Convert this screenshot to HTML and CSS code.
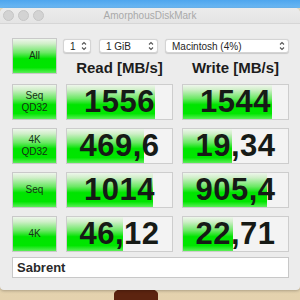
FILE: index.html
```html
<!DOCTYPE html>
<html lang="en">
<head>
    <meta charset="UTF-8">
    <title>AmorphousDiskMark</title>
    <link rel="stylesheet" href="styles.css">
</head>
<body>
    <div class="desktop">
        <div class="window">
            <div class="titlebar">
                <div class="lights">
                    <span class="light"></span>
                    <span class="light"></span>
                    <span class="light"></span>
                </div>
                <div class="title">AmorphousDiskMark</div>
            </div>

            <div class="content">
                <div class="top">
                    <div class="btn all">All</div>
                    <div class="controls">
                        <div class="selects">
                            <div class="select s-count">1
                                <svg class="arrows" viewBox="0 0 6 10"><path d="M1 3.5L3 1.5L5 3.5M1 6.5L3 8.5L5 6.5"/></svg>
                            </div>
                            <div class="select s-size">1 GiB
                                <svg class="arrows" viewBox="0 0 6 10"><path d="M1 3.5L3 1.5L5 3.5M1 6.5L3 8.5L5 6.5"/></svg>
                            </div>
                            <div class="select s-drive">Macintosh (4%)
                                <svg class="arrows" viewBox="0 0 6 10"><path d="M1 3.5L3 1.5L5 3.5M1 6.5L3 8.5L5 6.5"/></svg>
                            </div>
                        </div>
                        <div class="heads">
                            <div class="head">Read [MB/s]</div>
                            <div class="head">Write [MB/s]</div>
                        </div>
                    </div>
                </div>

                <div class="results">
                    <div class="btn">Seq<br>QD32</div>
                    <div class="value"><div class="fill" style="width: 88px"></div><span class="num">1556</span></div>
                    <div class="value"><div class="fill" style="width: 89px"></div><span class="num">1544</span></div>

                    <div class="btn">4K<br>QD32</div>
                    <div class="value"><div class="fill" style="width: 77px"></div><span class="num">469,6</span></div>
                    <div class="value"><div class="fill" style="width: 49px"></div><span class="num">19,34</span></div>

                    <div class="btn">Seq</div>
                    <div class="value"><div class="fill" style="width: 86px"></div><span class="num">1014</span></div>
                    <div class="value"><div class="fill" style="width: 84px"></div><span class="num">905,4</span></div>

                    <div class="btn">4K</div>
                    <div class="value"><div class="fill" style="width: 56px"></div><span class="num">46,12</span></div>
                    <div class="value"><div class="fill" style="width: 50px"></div><span class="num">22,71</span></div>
                </div>

                <div class="comment">Sabrent</div>
            </div>
        </div>
        <div class="blob"></div>
    </div>
</body>
</html>
```

FILE: styles.css
```css
body { margin: 0; font-family: "Liberation Sans", Arial, sans-serif; }
.desktop { position: relative; width: 300px; height: 300px; overflow: hidden; padding-top: 8px; box-sizing: border-box;
    background: linear-gradient(#4ea6ee 0, #6cb8f2 8px, #ebdfc4 8px, #e4d2ae 100%); }
.window { position: relative; z-index: 1; height: 282px; background: #ececec; border-radius: 5px 5px 4px 4px; box-shadow: 0 1px 3px rgba(0,0,0,0.25); }

.titlebar { position: relative; height: 15px; border-bottom: 1px solid #d6d6d6; background: linear-gradient(#ececec, #e4e4e4); border-radius: 5px 5px 0 0; }
.lights { position: absolute; left: 3px; top: 2px; display: flex; gap: 4px; }
.light { width: 9px; height: 9px; border-radius: 50%; background: #d3d3d3; border: 0.5px solid #c6c6c6; }
.title { text-align: center; font-size: 10px; line-height: 16px; color: #a9a9a9; }

.content { padding: 14px 11px 0 12px; }
.top { display: flex; }
.btn { box-sizing: border-box; width: 45px; height: 36px; display: flex; align-items: center; justify-content: center; text-align: center;
    font-size: 10px; line-height: 12px; color: #153015; border: 1px solid #c9c9c9;
    background: linear-gradient(#eef6ec 0%, #cfefc8 14%, #6ae864 40%, #00e400 58%, #00e600 84%, #5cee58 100%); }
.controls { margin-left: 6px; width: 226px; }
.selects { display: flex; gap: 7px; margin-top: 1px; }
.s-count { width: 28px; }
.s-size { width: 59px; margin-left: 1px; }
.s-drive { width: 124px; }
.select { position: relative; box-sizing: border-box; height: 14px; padding-left: 6px; font-size: 10px; line-height: 13px; color: #262626;
    background: #fff; border: 1px solid #d4d4d4; border-radius: 3px; box-shadow: 0 0.5px 1px rgba(0,0,0,0.15); }
.arrows { position: absolute; right: 3px; top: 1px; width: 6px; height: 10px; fill: none; stroke: #555; stroke-width: 1.1; }
.heads { display: grid; grid-template-columns: 107px 107px; column-gap: 9px; padding-left: 3px; margin-top: 6px; }
.head { text-align: center; font-size: 15px; font-weight: bold; line-height: 17px; color: #1c1c1c; }

.results { display: grid; grid-template-columns: 45px 107px 107px; gap: 8px 9px; margin-top: 8px; }
.value { position: relative; box-sizing: border-box; height: 36px; border: 1px solid #cdcdcd; background: #f3f3f3;
    display: flex; align-items: center; justify-content: center; }
.fill { position: absolute; left: 0; top: 0; bottom: 0;
    background: linear-gradient(#eef6ec 0%, #cfefc8 14%, #6ae864 40%, #00e400 58%, #00e600 84%, #5cee58 100%); }
.num { position: relative; font-size: 31px; font-weight: bold; color: #161a16; letter-spacing: 0.5px; }

.comment { box-sizing: border-box; height: 21px; margin-top: 5px; padding-left: 4px; background: #fff; border: 1px solid #c8c8c8;
    font-size: 13px; font-weight: bold; line-height: 19px; color: #2a2a2a; }

.blob { position: absolute; left: 114px; top: 288px; width: 44px; height: 20px; border-radius: 30% 30% 0 0; background: #5c2410; }
```
